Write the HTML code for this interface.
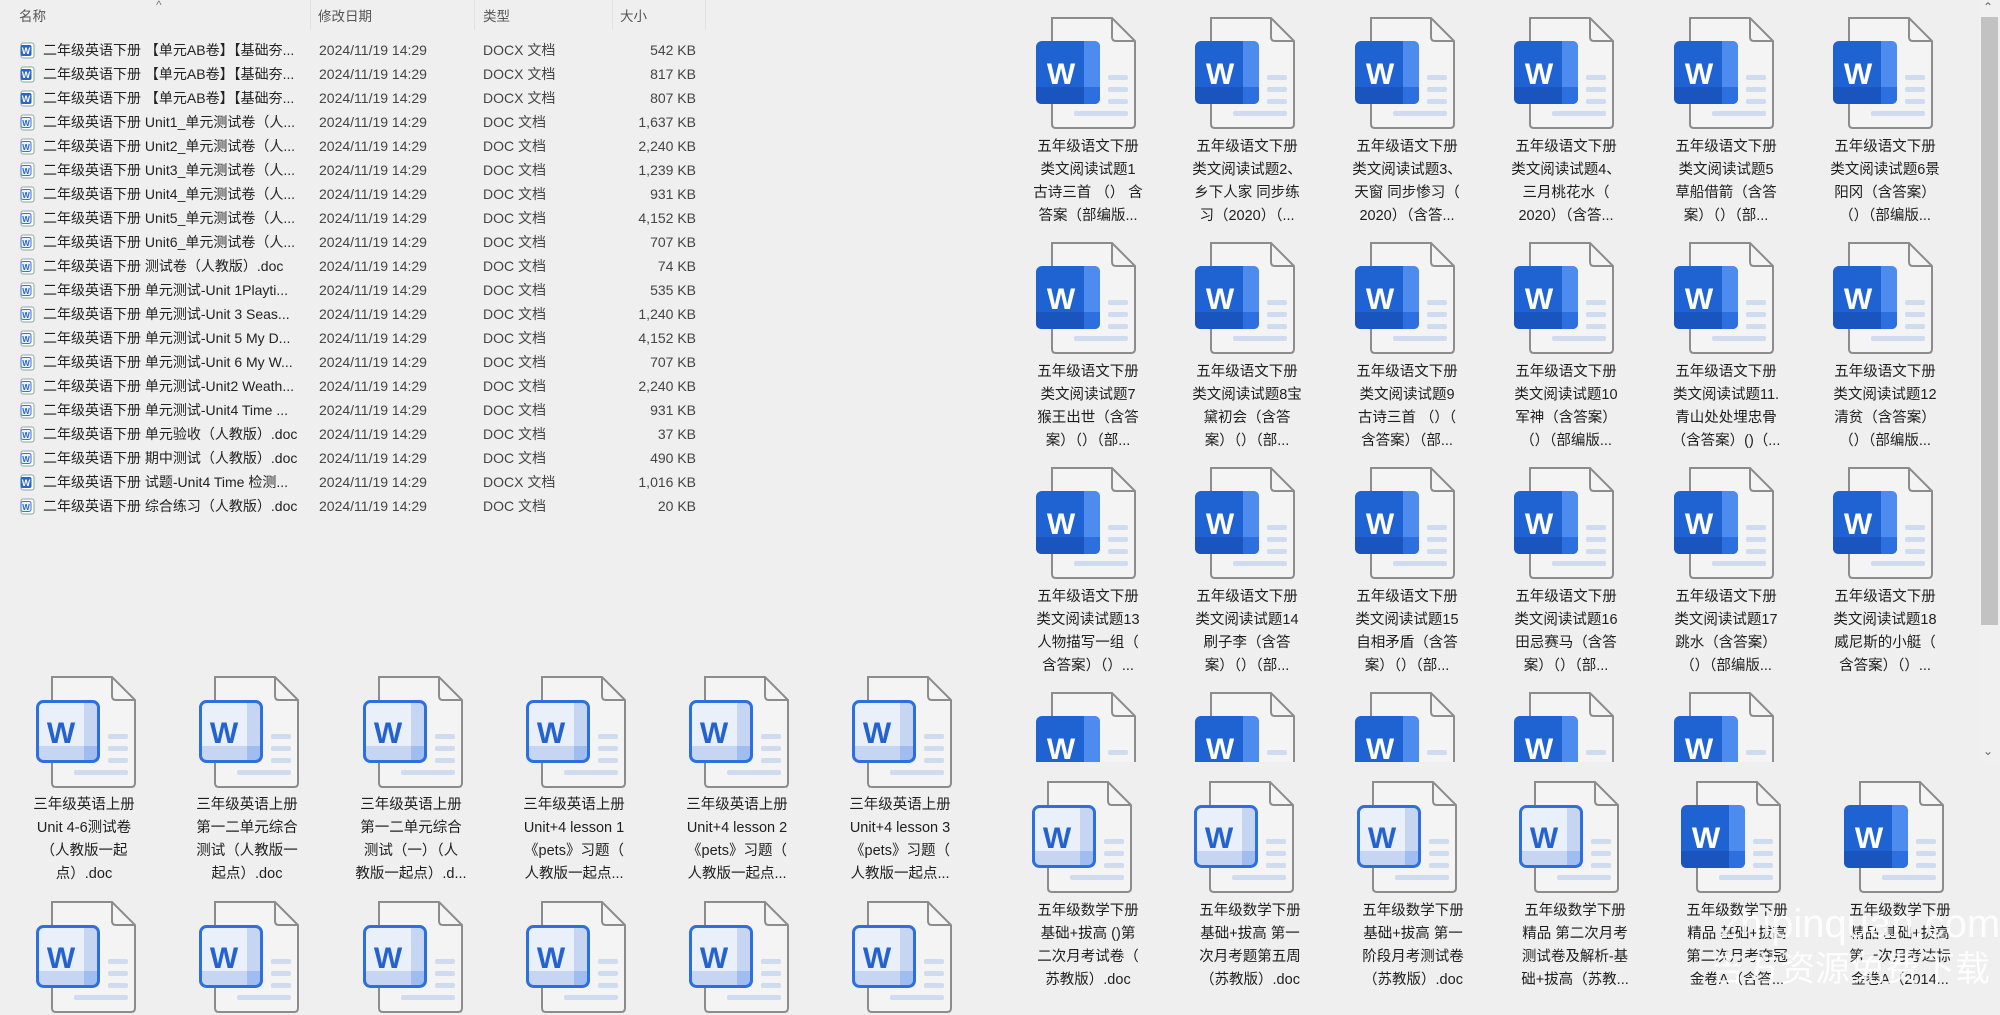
<!DOCTYPE html>
<html><head><meta charset="utf-8">
<style>
*{margin:0;padding:0;box-sizing:border-box}
body{width:2000px;height:1000px;background:#efefef;overflow:hidden;position:relative;font-family:"Liberation Sans","Noto Sans CJK SC",sans-serif;color:#1e1e1e}
.hdr{position:absolute;top:6px;font-size:13.5px;color:#555;height:22px;line-height:22px}
.sep{position:absolute;top:0;width:1px;height:30px;background:#e2e2e2}
.row{position:absolute;left:0;width:710px;height:24px;font-size:14px;line-height:24px;color:#222}
.row span{position:absolute;white-space:nowrap}
.row .ic{left:20px;top:4px;width:15px;height:17px}
.row .n{left:43px}
.row .d{left:319px;color:#444}
.row .t{left:483px;color:#444}
.row .s{right:14px;color:#444}
.lbl{position:absolute;width:150px;text-align:center;font-size:14.5px;line-height:23px;color:#1e1e1e}
#rp{position:absolute;left:1020px;top:0;width:960px;height:762px;overflow:hidden}
.sb{position:absolute;left:1979px;top:0;width:21px;height:762px;background:#f0f0f0}
.th{position:absolute;left:1981px;top:17px;width:17px;height:608px;background:#c2c2c2}
.wm{position:absolute;color:rgba(255,255,255,.85);white-space:nowrap;line-height:1}
</style></head><body>

<div class="hdr" style="left:19px">名称</div>
<div style="position:absolute;left:156px;top:-2px;font-size:12px;color:#777">^</div>
<div class="hdr" style="left:318px">修改日期</div>
<div class="hdr" style="left:483px">类型</div>
<div class="hdr" style="left:620px">大小</div>
<div class="sep" style="left:310px"></div>
<div class="sep" style="left:474px"></div>
<div class="sep" style="left:612px"></div>
<div class="sep" style="left:705px"></div>

<div class="row" style="top:38px"><span class="ic"><svg width="15" height="17"><rect x="1" y="1" width="13" height="15" rx="2" fill="#fff" stroke="#8aa"/><rect x="0.5" y="3" width="11" height="11" rx="2" fill="#2a64c8"/><text x="6" y="12" font-size="9" fill="#fff" text-anchor="middle" font-family="Liberation Sans" font-weight="bold">W</text></svg></span><span class="n">二年级英语下册 【单元AB卷】【基础夯...</span><span class="d">2024/11/19 14:29</span><span class="t">DOCX 文档</span><span class="s">542 KB</span></div>
<div class="row" style="top:62px"><span class="ic"><svg width="15" height="17"><rect x="1" y="1" width="13" height="15" rx="2" fill="#fff" stroke="#8aa"/><rect x="0.5" y="3" width="11" height="11" rx="2" fill="#2a64c8"/><text x="6" y="12" font-size="9" fill="#fff" text-anchor="middle" font-family="Liberation Sans" font-weight="bold">W</text></svg></span><span class="n">二年级英语下册 【单元AB卷】【基础夯...</span><span class="d">2024/11/19 14:29</span><span class="t">DOCX 文档</span><span class="s">817 KB</span></div>
<div class="row" style="top:86px"><span class="ic"><svg width="15" height="17"><rect x="1" y="1" width="13" height="15" rx="2" fill="#fff" stroke="#8aa"/><rect x="0.5" y="3" width="11" height="11" rx="2" fill="#2a64c8"/><text x="6" y="12" font-size="9" fill="#fff" text-anchor="middle" font-family="Liberation Sans" font-weight="bold">W</text></svg></span><span class="n">二年级英语下册 【单元AB卷】【基础夯...</span><span class="d">2024/11/19 14:29</span><span class="t">DOCX 文档</span><span class="s">807 KB</span></div>
<div class="row" style="top:110px"><span class="ic"><svg width="15" height="17"><rect x="1" y="1" width="13" height="15" rx="2" fill="#fff" stroke="#8aa"/><rect x="1" y="3.5" width="10" height="10" rx="2" fill="#eef3fb" stroke="#3a72d4"/><text x="6" y="12" font-size="8" fill="#2a64c8" text-anchor="middle" font-family="Liberation Sans" font-weight="bold">W</text></svg></span><span class="n">二年级英语下册 Unit1_单元测试卷（人...</span><span class="d">2024/11/19 14:29</span><span class="t">DOC 文档</span><span class="s">1,637 KB</span></div>
<div class="row" style="top:134px"><span class="ic"><svg width="15" height="17"><rect x="1" y="1" width="13" height="15" rx="2" fill="#fff" stroke="#8aa"/><rect x="1" y="3.5" width="10" height="10" rx="2" fill="#eef3fb" stroke="#3a72d4"/><text x="6" y="12" font-size="8" fill="#2a64c8" text-anchor="middle" font-family="Liberation Sans" font-weight="bold">W</text></svg></span><span class="n">二年级英语下册 Unit2_单元测试卷（人...</span><span class="d">2024/11/19 14:29</span><span class="t">DOC 文档</span><span class="s">2,240 KB</span></div>
<div class="row" style="top:158px"><span class="ic"><svg width="15" height="17"><rect x="1" y="1" width="13" height="15" rx="2" fill="#fff" stroke="#8aa"/><rect x="1" y="3.5" width="10" height="10" rx="2" fill="#eef3fb" stroke="#3a72d4"/><text x="6" y="12" font-size="8" fill="#2a64c8" text-anchor="middle" font-family="Liberation Sans" font-weight="bold">W</text></svg></span><span class="n">二年级英语下册 Unit3_单元测试卷（人...</span><span class="d">2024/11/19 14:29</span><span class="t">DOC 文档</span><span class="s">1,239 KB</span></div>
<div class="row" style="top:182px"><span class="ic"><svg width="15" height="17"><rect x="1" y="1" width="13" height="15" rx="2" fill="#fff" stroke="#8aa"/><rect x="1" y="3.5" width="10" height="10" rx="2" fill="#eef3fb" stroke="#3a72d4"/><text x="6" y="12" font-size="8" fill="#2a64c8" text-anchor="middle" font-family="Liberation Sans" font-weight="bold">W</text></svg></span><span class="n">二年级英语下册 Unit4_单元测试卷（人...</span><span class="d">2024/11/19 14:29</span><span class="t">DOC 文档</span><span class="s">931 KB</span></div>
<div class="row" style="top:206px"><span class="ic"><svg width="15" height="17"><rect x="1" y="1" width="13" height="15" rx="2" fill="#fff" stroke="#8aa"/><rect x="1" y="3.5" width="10" height="10" rx="2" fill="#eef3fb" stroke="#3a72d4"/><text x="6" y="12" font-size="8" fill="#2a64c8" text-anchor="middle" font-family="Liberation Sans" font-weight="bold">W</text></svg></span><span class="n">二年级英语下册 Unit5_单元测试卷（人...</span><span class="d">2024/11/19 14:29</span><span class="t">DOC 文档</span><span class="s">4,152 KB</span></div>
<div class="row" style="top:230px"><span class="ic"><svg width="15" height="17"><rect x="1" y="1" width="13" height="15" rx="2" fill="#fff" stroke="#8aa"/><rect x="1" y="3.5" width="10" height="10" rx="2" fill="#eef3fb" stroke="#3a72d4"/><text x="6" y="12" font-size="8" fill="#2a64c8" text-anchor="middle" font-family="Liberation Sans" font-weight="bold">W</text></svg></span><span class="n">二年级英语下册 Unit6_单元测试卷（人...</span><span class="d">2024/11/19 14:29</span><span class="t">DOC 文档</span><span class="s">707 KB</span></div>
<div class="row" style="top:254px"><span class="ic"><svg width="15" height="17"><rect x="1" y="1" width="13" height="15" rx="2" fill="#fff" stroke="#8aa"/><rect x="1" y="3.5" width="10" height="10" rx="2" fill="#eef3fb" stroke="#3a72d4"/><text x="6" y="12" font-size="8" fill="#2a64c8" text-anchor="middle" font-family="Liberation Sans" font-weight="bold">W</text></svg></span><span class="n">二年级英语下册 测试卷（人教版）.doc</span><span class="d">2024/11/19 14:29</span><span class="t">DOC 文档</span><span class="s">74 KB</span></div>
<div class="row" style="top:278px"><span class="ic"><svg width="15" height="17"><rect x="1" y="1" width="13" height="15" rx="2" fill="#fff" stroke="#8aa"/><rect x="1" y="3.5" width="10" height="10" rx="2" fill="#eef3fb" stroke="#3a72d4"/><text x="6" y="12" font-size="8" fill="#2a64c8" text-anchor="middle" font-family="Liberation Sans" font-weight="bold">W</text></svg></span><span class="n">二年级英语下册 单元测试-Unit 1Playti...</span><span class="d">2024/11/19 14:29</span><span class="t">DOC 文档</span><span class="s">535 KB</span></div>
<div class="row" style="top:302px"><span class="ic"><svg width="15" height="17"><rect x="1" y="1" width="13" height="15" rx="2" fill="#fff" stroke="#8aa"/><rect x="1" y="3.5" width="10" height="10" rx="2" fill="#eef3fb" stroke="#3a72d4"/><text x="6" y="12" font-size="8" fill="#2a64c8" text-anchor="middle" font-family="Liberation Sans" font-weight="bold">W</text></svg></span><span class="n">二年级英语下册 单元测试-Unit 3 Seas...</span><span class="d">2024/11/19 14:29</span><span class="t">DOC 文档</span><span class="s">1,240 KB</span></div>
<div class="row" style="top:326px"><span class="ic"><svg width="15" height="17"><rect x="1" y="1" width="13" height="15" rx="2" fill="#fff" stroke="#8aa"/><rect x="1" y="3.5" width="10" height="10" rx="2" fill="#eef3fb" stroke="#3a72d4"/><text x="6" y="12" font-size="8" fill="#2a64c8" text-anchor="middle" font-family="Liberation Sans" font-weight="bold">W</text></svg></span><span class="n">二年级英语下册 单元测试-Unit 5 My D...</span><span class="d">2024/11/19 14:29</span><span class="t">DOC 文档</span><span class="s">4,152 KB</span></div>
<div class="row" style="top:350px"><span class="ic"><svg width="15" height="17"><rect x="1" y="1" width="13" height="15" rx="2" fill="#fff" stroke="#8aa"/><rect x="1" y="3.5" width="10" height="10" rx="2" fill="#eef3fb" stroke="#3a72d4"/><text x="6" y="12" font-size="8" fill="#2a64c8" text-anchor="middle" font-family="Liberation Sans" font-weight="bold">W</text></svg></span><span class="n">二年级英语下册 单元测试-Unit 6 My W...</span><span class="d">2024/11/19 14:29</span><span class="t">DOC 文档</span><span class="s">707 KB</span></div>
<div class="row" style="top:374px"><span class="ic"><svg width="15" height="17"><rect x="1" y="1" width="13" height="15" rx="2" fill="#fff" stroke="#8aa"/><rect x="1" y="3.5" width="10" height="10" rx="2" fill="#eef3fb" stroke="#3a72d4"/><text x="6" y="12" font-size="8" fill="#2a64c8" text-anchor="middle" font-family="Liberation Sans" font-weight="bold">W</text></svg></span><span class="n">二年级英语下册 单元测试-Unit2 Weath...</span><span class="d">2024/11/19 14:29</span><span class="t">DOC 文档</span><span class="s">2,240 KB</span></div>
<div class="row" style="top:398px"><span class="ic"><svg width="15" height="17"><rect x="1" y="1" width="13" height="15" rx="2" fill="#fff" stroke="#8aa"/><rect x="1" y="3.5" width="10" height="10" rx="2" fill="#eef3fb" stroke="#3a72d4"/><text x="6" y="12" font-size="8" fill="#2a64c8" text-anchor="middle" font-family="Liberation Sans" font-weight="bold">W</text></svg></span><span class="n">二年级英语下册 单元测试-Unit4 Time ...</span><span class="d">2024/11/19 14:29</span><span class="t">DOC 文档</span><span class="s">931 KB</span></div>
<div class="row" style="top:422px"><span class="ic"><svg width="15" height="17"><rect x="1" y="1" width="13" height="15" rx="2" fill="#fff" stroke="#8aa"/><rect x="1" y="3.5" width="10" height="10" rx="2" fill="#eef3fb" stroke="#3a72d4"/><text x="6" y="12" font-size="8" fill="#2a64c8" text-anchor="middle" font-family="Liberation Sans" font-weight="bold">W</text></svg></span><span class="n">二年级英语下册 单元验收（人教版）.doc</span><span class="d">2024/11/19 14:29</span><span class="t">DOC 文档</span><span class="s">37 KB</span></div>
<div class="row" style="top:446px"><span class="ic"><svg width="15" height="17"><rect x="1" y="1" width="13" height="15" rx="2" fill="#fff" stroke="#8aa"/><rect x="1" y="3.5" width="10" height="10" rx="2" fill="#eef3fb" stroke="#3a72d4"/><text x="6" y="12" font-size="8" fill="#2a64c8" text-anchor="middle" font-family="Liberation Sans" font-weight="bold">W</text></svg></span><span class="n">二年级英语下册 期中测试（人教版）.doc</span><span class="d">2024/11/19 14:29</span><span class="t">DOC 文档</span><span class="s">490 KB</span></div>
<div class="row" style="top:470px"><span class="ic"><svg width="15" height="17"><rect x="1" y="1" width="13" height="15" rx="2" fill="#fff" stroke="#8aa"/><rect x="0.5" y="3" width="11" height="11" rx="2" fill="#2a64c8"/><text x="6" y="12" font-size="9" fill="#fff" text-anchor="middle" font-family="Liberation Sans" font-weight="bold">W</text></svg></span><span class="n">二年级英语下册 试题-Unit4 Time 检测...</span><span class="d">2024/11/19 14:29</span><span class="t">DOCX 文档</span><span class="s">1,016 KB</span></div>
<div class="row" style="top:494px"><span class="ic"><svg width="15" height="17"><rect x="1" y="1" width="13" height="15" rx="2" fill="#fff" stroke="#8aa"/><rect x="1" y="3.5" width="10" height="10" rx="2" fill="#eef3fb" stroke="#3a72d4"/><text x="6" y="12" font-size="8" fill="#2a64c8" text-anchor="middle" font-family="Liberation Sans" font-weight="bold">W</text></svg></span><span class="n">二年级英语下册 综合练习（人教版）.doc</span><span class="d">2024/11/19 14:29</span><span class="t">DOC 文档</span><span class="s">20 KB</span></div>

<svg width="0" height="0" style="position:absolute">
<defs>
<g id="pg">
<path d="M16 1 H76 L99 24 V107 Q99 111 95 111 H20 Q16 111 16 107 Z" fill="#f4f4f4" stroke="#8c8c8c" stroke-width="2"/>
<path d="M76 1 V20 Q76 24 80 24 H99" fill="none" stroke="#8c8c8c" stroke-width="2"/>
<rect x="72" y="58" width="20" height="5" rx="2" fill="#cfdbee"/>
<rect x="72" y="70" width="20" height="5" rx="2" fill="#cfdbee"/>
<rect x="72" y="82" width="20" height="5" rx="2" fill="#cfdbee"/>
<rect x="38" y="94" width="54" height="5" rx="2" fill="#cfdbee"/>
</g>
<g id="solid">
<use href="#pg"/>
<rect x="0" y="24" width="64" height="63" rx="6" fill="#1f63d3"/>
<path d="M0 70 H64 V81 Q64 87 58 87 H6 Q0 87 0 81 Z" fill="#1a55bf"/>
<path d="M48 24 H58 Q64 24 64 30 V70 H48 Z" fill="#4d8bef"/>
<path d="M48 70 H64 V81 Q64 87 58 87 H48 Z" fill="#2e6fdf"/>
</g>
<g id="light">
<use href="#pg"/>
<rect x="1.5" y="25.5" width="61" height="60" rx="6" fill="#eaf0fa"/>
<path d="M48 25.5 H56 Q62.5 25.5 62.5 32 V85.5 H48 Z" fill="#c6d6f2"/>
<path d="M1.5 70 H62.5 V79 Q62.5 85.5 56 85.5 H8 Q1.5 85.5 1.5 79 Z" fill="#c6d6f2"/>
<path d="M48 70 H62.5 V79 Q62.5 85.5 56 85.5 H48 Z" fill="#9fbdf0"/>
<rect x="1.5" y="25.5" width="61" height="60" rx="6" fill="none" stroke="#2d6fdc" stroke-width="3"/>
</g>
</defs>
</svg>

<!-- bottom-left grid -->
<svg style="position:absolute;left:36px;top:676px" width="104" height="114"><use href="#light"/><text x="25" y="67" font-size="30" font-weight="bold" fill="#2462d0" text-anchor="middle" font-family="Liberation Sans">W</text></svg>
<div class="lbl" style="left:9px;top:794px">三年级英语上册<br>Unit 4-6测试卷<br>（人教版一起<br>点）.doc</div>
<svg style="position:absolute;left:199px;top:676px" width="104" height="114"><use href="#light"/><text x="25" y="67" font-size="30" font-weight="bold" fill="#2462d0" text-anchor="middle" font-family="Liberation Sans">W</text></svg>
<div class="lbl" style="left:172px;top:794px">三年级英语上册<br>第一二单元综合<br>测试（人教版一<br>起点）.doc</div>
<svg style="position:absolute;left:363px;top:676px" width="104" height="114"><use href="#light"/><text x="25" y="67" font-size="30" font-weight="bold" fill="#2462d0" text-anchor="middle" font-family="Liberation Sans">W</text></svg>
<div class="lbl" style="left:336px;top:794px">三年级英语上册<br>第一二单元综合<br>测试（一）（人<br>教版一起点）.d...</div>
<svg style="position:absolute;left:526px;top:676px" width="104" height="114"><use href="#light"/><text x="25" y="67" font-size="30" font-weight="bold" fill="#2462d0" text-anchor="middle" font-family="Liberation Sans">W</text></svg>
<div class="lbl" style="left:499px;top:794px">三年级英语上册<br>Unit+4 lesson 1<br>《pets》习题（<br>人教版一起点...</div>
<svg style="position:absolute;left:689px;top:676px" width="104" height="114"><use href="#light"/><text x="25" y="67" font-size="30" font-weight="bold" fill="#2462d0" text-anchor="middle" font-family="Liberation Sans">W</text></svg>
<div class="lbl" style="left:662px;top:794px">三年级英语上册<br>Unit+4 lesson 2<br>《pets》习题（<br>人教版一起点...</div>
<svg style="position:absolute;left:852px;top:676px" width="104" height="114"><use href="#light"/><text x="25" y="67" font-size="30" font-weight="bold" fill="#2462d0" text-anchor="middle" font-family="Liberation Sans">W</text></svg>
<div class="lbl" style="left:825px;top:794px">三年级英语上册<br>Unit+4 lesson 3<br>《pets》习题（<br>人教版一起点...</div>

<svg style="position:absolute;left:36px;top:901px" width="104" height="114"><use href="#light"/><text x="25" y="67" font-size="30" font-weight="bold" fill="#2462d0" text-anchor="middle" font-family="Liberation Sans">W</text></svg>
<svg style="position:absolute;left:199px;top:901px" width="104" height="114"><use href="#light"/><text x="25" y="67" font-size="30" font-weight="bold" fill="#2462d0" text-anchor="middle" font-family="Liberation Sans">W</text></svg>
<svg style="position:absolute;left:363px;top:901px" width="104" height="114"><use href="#light"/><text x="25" y="67" font-size="30" font-weight="bold" fill="#2462d0" text-anchor="middle" font-family="Liberation Sans">W</text></svg>
<svg style="position:absolute;left:526px;top:901px" width="104" height="114"><use href="#light"/><text x="25" y="67" font-size="30" font-weight="bold" fill="#2462d0" text-anchor="middle" font-family="Liberation Sans">W</text></svg>
<svg style="position:absolute;left:689px;top:901px" width="104" height="114"><use href="#light"/><text x="25" y="67" font-size="30" font-weight="bold" fill="#2462d0" text-anchor="middle" font-family="Liberation Sans">W</text></svg>
<svg style="position:absolute;left:852px;top:901px" width="104" height="114"><use href="#light"/><text x="25" y="67" font-size="30" font-weight="bold" fill="#2462d0" text-anchor="middle" font-family="Liberation Sans">W</text></svg>

<div id="rp">
<svg style="position:absolute;left:16px;top:17px" width="104" height="114"><use href="#solid"/><text x="25" y="67" font-size="30" font-weight="bold" fill="#fff" text-anchor="middle" font-family="Liberation Sans">W</text></svg>
<div class="lbl" style="left:-7px;top:136px">五年级语文下册<br>类文阅读试题1<br>古诗三首 （） 含<br>答案（部编版...</div>
<svg style="position:absolute;left:175px;top:17px" width="104" height="114"><use href="#solid"/><text x="25" y="67" font-size="30" font-weight="bold" fill="#fff" text-anchor="middle" font-family="Liberation Sans">W</text></svg>
<div class="lbl" style="left:152px;top:136px">五年级语文下册<br>类文阅读试题2、<br>乡下人家 同步练<br>习（2020）（...</div>
<svg style="position:absolute;left:335px;top:17px" width="104" height="114"><use href="#solid"/><text x="25" y="67" font-size="30" font-weight="bold" fill="#fff" text-anchor="middle" font-family="Liberation Sans">W</text></svg>
<div class="lbl" style="left:312px;top:136px">五年级语文下册<br>类文阅读试题3、<br>天窗 同步惨习（<br>2020）（含答...</div>
<svg style="position:absolute;left:494px;top:17px" width="104" height="114"><use href="#solid"/><text x="25" y="67" font-size="30" font-weight="bold" fill="#fff" text-anchor="middle" font-family="Liberation Sans">W</text></svg>
<div class="lbl" style="left:471px;top:136px">五年级语文下册<br>类文阅读试题4、<br>三月桃花水（<br>2020）（含答...</div>
<svg style="position:absolute;left:654px;top:17px" width="104" height="114"><use href="#solid"/><text x="25" y="67" font-size="30" font-weight="bold" fill="#fff" text-anchor="middle" font-family="Liberation Sans">W</text></svg>
<div class="lbl" style="left:631px;top:136px">五年级语文下册<br>类文阅读试题5<br>草船借箭（含答<br>案）（）（部...</div>
<svg style="position:absolute;left:813px;top:17px" width="104" height="114"><use href="#solid"/><text x="25" y="67" font-size="30" font-weight="bold" fill="#fff" text-anchor="middle" font-family="Liberation Sans">W</text></svg>
<div class="lbl" style="left:790px;top:136px">五年级语文下册<br>类文阅读试题6景<br>阳冈（含答案）<br>（）（部编版...</div>

<svg style="position:absolute;left:16px;top:242px" width="104" height="114"><use href="#solid"/><text x="25" y="67" font-size="30" font-weight="bold" fill="#fff" text-anchor="middle" font-family="Liberation Sans">W</text></svg>
<div class="lbl" style="left:-7px;top:361px">五年级语文下册<br>类文阅读试题7<br>猴王出世（含答<br>案）（）（部...</div>
<svg style="position:absolute;left:175px;top:242px" width="104" height="114"><use href="#solid"/><text x="25" y="67" font-size="30" font-weight="bold" fill="#fff" text-anchor="middle" font-family="Liberation Sans">W</text></svg>
<div class="lbl" style="left:152px;top:361px">五年级语文下册<br>类文阅读试题8宝<br>黛初会（含答<br>案）（）（部...</div>
<svg style="position:absolute;left:335px;top:242px" width="104" height="114"><use href="#solid"/><text x="25" y="67" font-size="30" font-weight="bold" fill="#fff" text-anchor="middle" font-family="Liberation Sans">W</text></svg>
<div class="lbl" style="left:312px;top:361px">五年级语文下册<br>类文阅读试题9<br>古诗三首 （）（<br>含答案）（部...</div>
<svg style="position:absolute;left:494px;top:242px" width="104" height="114"><use href="#solid"/><text x="25" y="67" font-size="30" font-weight="bold" fill="#fff" text-anchor="middle" font-family="Liberation Sans">W</text></svg>
<div class="lbl" style="left:471px;top:361px">五年级语文下册<br>类文阅读试题10<br>军神（含答案）<br>（）（部编版...</div>
<svg style="position:absolute;left:654px;top:242px" width="104" height="114"><use href="#solid"/><text x="25" y="67" font-size="30" font-weight="bold" fill="#fff" text-anchor="middle" font-family="Liberation Sans">W</text></svg>
<div class="lbl" style="left:631px;top:361px">五年级语文下册<br>类文阅读试题11.<br>青山处处埋忠骨<br>（含答案）()（...</div>
<svg style="position:absolute;left:813px;top:242px" width="104" height="114"><use href="#solid"/><text x="25" y="67" font-size="30" font-weight="bold" fill="#fff" text-anchor="middle" font-family="Liberation Sans">W</text></svg>
<div class="lbl" style="left:790px;top:361px">五年级语文下册<br>类文阅读试题12<br>清贫（含答案）<br>（）（部编版...</div>

<svg style="position:absolute;left:16px;top:467px" width="104" height="114"><use href="#solid"/><text x="25" y="67" font-size="30" font-weight="bold" fill="#fff" text-anchor="middle" font-family="Liberation Sans">W</text></svg>
<div class="lbl" style="left:-7px;top:586px">五年级语文下册<br>类文阅读试题13<br>人物描写一组（<br>含答案）（）...</div>
<svg style="position:absolute;left:175px;top:467px" width="104" height="114"><use href="#solid"/><text x="25" y="67" font-size="30" font-weight="bold" fill="#fff" text-anchor="middle" font-family="Liberation Sans">W</text></svg>
<div class="lbl" style="left:152px;top:586px">五年级语文下册<br>类文阅读试题14<br>刷子李（含答<br>案）（）（部...</div>
<svg style="position:absolute;left:335px;top:467px" width="104" height="114"><use href="#solid"/><text x="25" y="67" font-size="30" font-weight="bold" fill="#fff" text-anchor="middle" font-family="Liberation Sans">W</text></svg>
<div class="lbl" style="left:312px;top:586px">五年级语文下册<br>类文阅读试题15<br>自相矛盾（含答<br>案）（）（部...</div>
<svg style="position:absolute;left:494px;top:467px" width="104" height="114"><use href="#solid"/><text x="25" y="67" font-size="30" font-weight="bold" fill="#fff" text-anchor="middle" font-family="Liberation Sans">W</text></svg>
<div class="lbl" style="left:471px;top:586px">五年级语文下册<br>类文阅读试题16<br>田忌赛马（含答<br>案）（）（部...</div>
<svg style="position:absolute;left:654px;top:467px" width="104" height="114"><use href="#solid"/><text x="25" y="67" font-size="30" font-weight="bold" fill="#fff" text-anchor="middle" font-family="Liberation Sans">W</text></svg>
<div class="lbl" style="left:631px;top:586px">五年级语文下册<br>类文阅读试题17<br>跳水（含答案）<br>（）（部编版...</div>
<svg style="position:absolute;left:813px;top:467px" width="104" height="114"><use href="#solid"/><text x="25" y="67" font-size="30" font-weight="bold" fill="#fff" text-anchor="middle" font-family="Liberation Sans">W</text></svg>
<div class="lbl" style="left:790px;top:586px">五年级语文下册<br>类文阅读试题18<br>威尼斯的小艇（<br>含答案）（）...</div>

<svg style="position:absolute;left:16px;top:692px" width="104" height="114"><use href="#solid"/><text x="25" y="67" font-size="30" font-weight="bold" fill="#fff" text-anchor="middle" font-family="Liberation Sans">W</text></svg>
<svg style="position:absolute;left:175px;top:692px" width="104" height="114"><use href="#solid"/><text x="25" y="67" font-size="30" font-weight="bold" fill="#fff" text-anchor="middle" font-family="Liberation Sans">W</text></svg>
<svg style="position:absolute;left:335px;top:692px" width="104" height="114"><use href="#solid"/><text x="25" y="67" font-size="30" font-weight="bold" fill="#fff" text-anchor="middle" font-family="Liberation Sans">W</text></svg>
<svg style="position:absolute;left:494px;top:692px" width="104" height="114"><use href="#solid"/><text x="25" y="67" font-size="30" font-weight="bold" fill="#fff" text-anchor="middle" font-family="Liberation Sans">W</text></svg>
<svg style="position:absolute;left:654px;top:692px" width="104" height="114"><use href="#solid"/><text x="25" y="67" font-size="30" font-weight="bold" fill="#fff" text-anchor="middle" font-family="Liberation Sans">W</text></svg>
</div>

<div class="sb"></div>
<div class="th"></div>
<div style="position:absolute;left:1983px;top:0px;font-size:12px;color:#666">&#x2303;</div>
<div style="position:absolute;left:1983px;top:744px;font-size:12px;color:#666">&#x2304;</div>

<!-- bottom-right -->
<svg style="position:absolute;left:1032px;top:781px" width="104" height="114"><use href="#light"/><text x="25" y="67" font-size="30" font-weight="bold" fill="#2462d0" text-anchor="middle" font-family="Liberation Sans">W</text></svg>
<div class="lbl" style="left:1013px;top:900px">五年级数学下册<br>基础+拔高 ()第<br>二次月考试卷（<br>苏教版）.doc</div>
<svg style="position:absolute;left:1194px;top:781px" width="104" height="114"><use href="#light"/><text x="25" y="67" font-size="30" font-weight="bold" fill="#2462d0" text-anchor="middle" font-family="Liberation Sans">W</text></svg>
<div class="lbl" style="left:1175px;top:900px">五年级数学下册<br>基础+拔高 第一<br>次月考题第五周<br>（苏教版）.doc</div>
<svg style="position:absolute;left:1357px;top:781px" width="104" height="114"><use href="#light"/><text x="25" y="67" font-size="30" font-weight="bold" fill="#2462d0" text-anchor="middle" font-family="Liberation Sans">W</text></svg>
<div class="lbl" style="left:1338px;top:900px">五年级数学下册<br>基础+拔高 第一<br>阶段月考测试卷<br>（苏教版）.doc</div>
<svg style="position:absolute;left:1519px;top:781px" width="104" height="114"><use href="#light"/><text x="25" y="67" font-size="30" font-weight="bold" fill="#2462d0" text-anchor="middle" font-family="Liberation Sans">W</text></svg>
<div class="lbl" style="left:1500px;top:900px">五年级数学下册<br>精品 第二次月考<br>测试卷及解析-基<br>础+拔高（苏教...</div>
<svg style="position:absolute;left:1681px;top:781px" width="104" height="114"><use href="#solid"/><text x="25" y="67" font-size="30" font-weight="bold" fill="#fff" text-anchor="middle" font-family="Liberation Sans">W</text></svg>
<div class="lbl" style="left:1662px;top:900px">五年级数学下册<br>精品 基础+拔高<br>第二次月考夺冠<br>金卷A（含答...</div>
<svg style="position:absolute;left:1844px;top:781px" width="104" height="114"><use href="#solid"/><text x="25" y="67" font-size="30" font-weight="bold" fill="#fff" text-anchor="middle" font-family="Liberation Sans">W</text></svg>
<div class="lbl" style="left:1825px;top:900px">五年级数学下册<br>精品 基础+拔高<br>第一次月考达标<br>金卷A（2014...</div>

<div class="wm" style="left:1720px;top:904px;font-size:40px;font-family:'Liberation Sans',sans-serif">zhipinquan.com</div>
<div class="wm" style="left:1710px;top:952px;font-size:35px;font-family:'Liberation Sans','Noto Sans CJK SC',sans-serif">吉方资源免费下载</div>

</body></html>
